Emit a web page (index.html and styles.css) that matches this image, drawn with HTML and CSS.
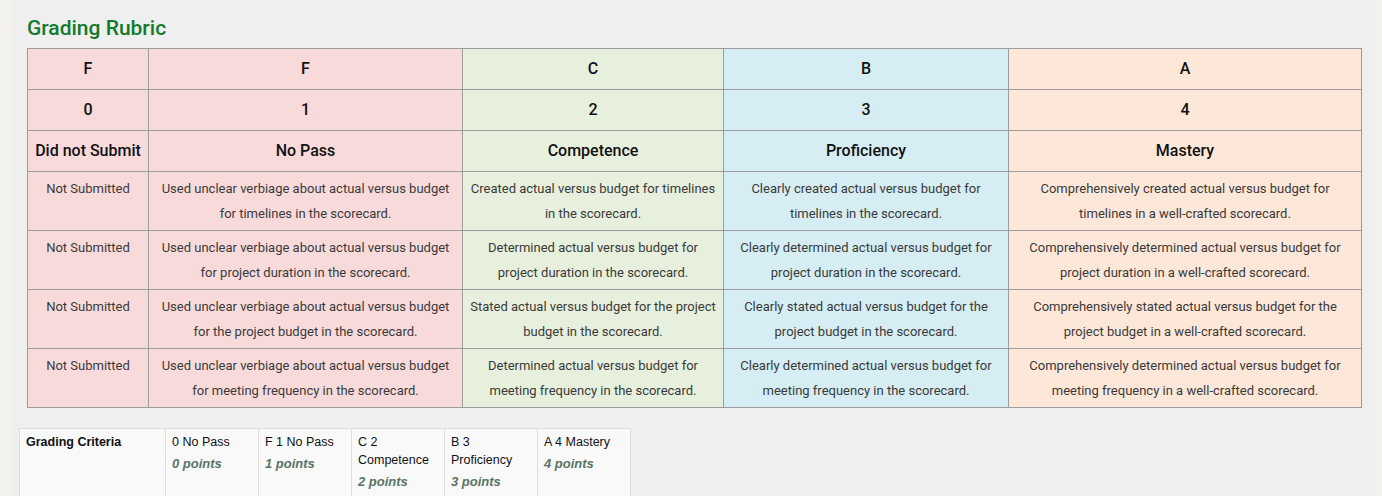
FILE: index.html
```html
<!DOCTYPE html>
<html>
<head>
<meta charset="utf-8">
<link rel="stylesheet" href="styles.css">
</head>
<body>
<div class="page">
  <h2 class="title">Grading Rubric</h2>
  <table class="rubric">
    <colgroup>
      <col class="c1"><col class="c2"><col class="c3"><col class="c4"><col class="c5">
    </colgroup>
    <tr class="head">
      <td class="f">F</td><td class="f">F</td><td class="c">C</td><td class="b">B</td><td class="a">A</td>
    </tr>
    <tr class="head">
      <td class="f">0</td><td class="f">1</td><td class="c">2</td><td class="b">3</td><td class="a">4</td>
    </tr>
    <tr class="head">
      <td class="f">Did not Submit</td><td class="f">No Pass</td><td class="c">Competence</td><td class="b">Proficiency</td><td class="a">Mastery</td>
    </tr>
    <tr class="body">
      <td class="f">Not Submitted</td>
      <td class="f">Used unclear verbiage about actual versus budget for timelines in the scorecard.</td>
      <td class="c">Created actual versus budget for timelines in the scorecard.</td>
      <td class="b">Clearly created actual versus budget for timelines in the scorecard.</td>
      <td class="a">Comprehensively created actual versus budget for timelines in a well-crafted scorecard.</td>
    </tr>
    <tr class="body">
      <td class="f">Not Submitted</td>
      <td class="f">Used unclear verbiage about actual versus budget for project duration in the scorecard.</td>
      <td class="c">Determined actual versus budget for project duration in the scorecard.</td>
      <td class="b">Clearly determined actual versus budget for project duration in the scorecard.</td>
      <td class="a">Comprehensively determined actual versus budget for project duration in a well-crafted scorecard.</td>
    </tr>
    <tr class="body">
      <td class="f">Not Submitted</td>
      <td class="f">Used unclear verbiage about actual versus budget for the project budget in the scorecard.</td>
      <td class="c">Stated actual versus budget for the project budget in the scorecard.</td>
      <td class="b">Clearly stated actual versus budget for the project budget in the scorecard.</td>
      <td class="a">Comprehensively stated actual versus budget for the project budget in a well-crafted scorecard.</td>
    </tr>
    <tr class="body">
      <td class="f">Not Submitted</td>
      <td class="f">Used unclear verbiage about actual versus budget for meeting frequency in the scorecard.</td>
      <td class="c">Determined actual versus budget for meeting frequency in the scorecard.</td>
      <td class="b">Clearly determined actual versus budget for meeting frequency in the scorecard.</td>
      <td class="a">Comprehensively determined actual versus budget for meeting frequency in a well-crafted scorecard.</td>
    </tr>
  </table>

  <table class="criteria">
    <tr>
      <th>Grading Criteria</th>
      <td>0 No Pass<span class="pts">0 points</span></td>
      <td>F 1 No Pass<span class="pts">1 points</span></td>
      <td>C 2 Competence<span class="pts">2 points</span></td>
      <td>B 3 Proficiency<span class="pts">3 points</span></td>
      <td>A 4 Mastery<span class="pts">4 points</span></td>
    </tr>
  </table>
</div>
</body>
</html>
```

FILE: styles.css
```css
html, body {
  margin: 0;
  padding: 0;
  background: #f4f2ee;
  height: 100%;
}

.page {
  margin: 0 7px 0 12px;
  background: #efefef;
  padding: 12px 14px 40px 15px;
  min-height: 100%;
  box-sizing: border-box;
  font-family: Roboto, "Liberation Sans", Arial, sans-serif;
}

.title {
  margin: 0 0 8px 0;
  padding-top: 4px;
  font-family: Roboto, "Liberation Sans", sans-serif;
  font-size: 21px;
  font-weight: 500;
  line-height: 24px;
  color: #137a2c;
}

.rubric {
  width: 1334px;
  border-collapse: collapse;
  table-layout: fixed;
  border: 1px solid #999;
}

.rubric .c1 { width: 121px; }
.rubric .c2 { width: 314px; }
.rubric .c3 { width: 261px; }
.rubric .c4 { width: 285px; }
.rubric .c5 { width: 353px; }

.rubric td {
  border: 1px solid #9c9c9c;
  text-align: center;
  vertical-align: top;
}

.rubric .f { background: #f8dadb; }
.rubric .c { background: #e7f0dd; }
.rubric .b { background: #d5edf3; }
.rubric .a { background: #fde7d9; }

.rubric .head td {
  height: 40px;
  box-sizing: border-box;
  padding: 10px 4px;
  font-size: 16px;
  font-weight: 500;
  line-height: 20px;
  color: #111;
  vertical-align: middle;
}

.rubric .body td {
  height: 59px;
  box-sizing: border-box;
  padding: 4px 6px;
  font-size: 13px;
  line-height: 25px;
  color: #3a3a3a;
}

.criteria {
  margin-top: 20px;
  margin-left: -8px;
  border-collapse: collapse;
  background: #f9f9f9;
  border: 1px solid #dedede;
  font-family: "Liberation Sans", Arial, sans-serif;
  font-size: 12.5px;
  line-height: 18px;
  color: #111;
}

.criteria th,
.criteria td {
  border-left: 1px solid #dedede;
  text-align: left;
  vertical-align: top;
  padding: 4px 6px 20px 6px;
  height: 64px;
  box-sizing: border-box;
}

.criteria th {
  width: 146px;
  font-weight: bold;
}

.criteria td {
  width: 93px;
}

.criteria .pts {
  display: block;
  margin-top: 4px;
  font-size: 13px;
  font-weight: bold;
  font-style: italic;
  color: #587565;
}
```
